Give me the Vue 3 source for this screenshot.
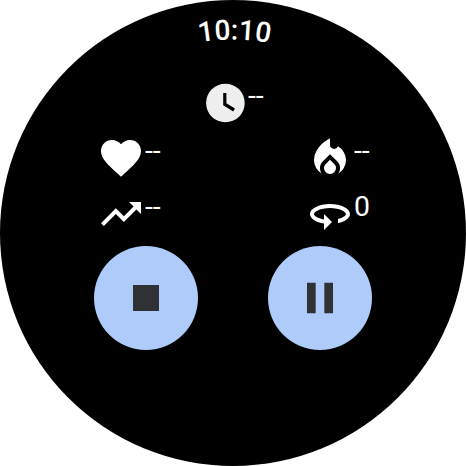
<script setup>
const icons = {
  clock: { box: '0 0 24 24', d: 'M12.2 2.35a9.65 9.65 0 1 0 0 19.3a9.65 9.65 0 1 0 0-19.3zM16.1 16.3L11.1 13.1V7h1.6v5.1l4.3 2.7-.9 1.5z' },
  heart: { box: '0 0 24 24', d: 'M12 21.35l-1.45-1.32C5.4 15.36 2 12.28 2 8.5 2 5.42 4.42 3 7.5 3c1.74 0 3.41.81 4.5 2.09C13.09 3.81 14.76 3 16.5 3 19.58 3 22 5.42 22 8.5c0 3.78-3.4 6.86-8.55 11.54L12 21.35z' },
  fire: { box: '0 -960 960 960', d: 'M160-400q0-105 50-187t110-138q60-56 110-82.5l50-26.5v132q0 37 25 58.5t56 21.5q17 0 32.5-7t28.5-23l18-22q72 42 116 116.5T800-400q0 88-43 160.5T644-125q17-24 26.5-52.5T680-238q0-40-15-75.5T622-377L480-516 339-377q-29 29-44 64t-15 75q0 32 9.5 60.5T316-125q-70-42-113-114.5T160-400Zm320-4 85 83q17 17 26 38t9 45q0 49-35 83.5T480-120q-50 0-85-34.5T360-238q0-23 9-44.5t26-38.5l85-83Z' },
  trend: { box: '0 0 24 24', d: 'M16 6l2.29 2.29-4.88 4.88-4-4L2 16.59 3.41 18l6-6 4 4 6.3-6.29L22 12V6z' },
  laps: { box: '0 0 24 24', d: 'M12 7C6.48 7 2 9.24 2 12c0 2.24 2.94 4.13 7 4.77V20l4-4-4-4v2.73c-3.15-.56-5-1.9-5-2.73 0-1.06 3.04-3 8-3s8 1.94 8 3c0 .73-1.46 1.89-4 2.53v2.05c3.53-.77 6-2.53 6-4.58 0-2.76-4.48-5-10-5z' },
}
const rows = [
  [{ icon: 'clock', value: '--' }],
  [{ icon: 'heart', value: '--' }, { icon: 'fire', value: '--' }],
  [{ icon: 'trend', value: '--' }, { icon: 'laps', value: '0' }],
]
</script>

<template>
  <main class="watch">
    <svg class="time" viewBox="0 0 466 79">
      <path id="time-arc" d="M39.5 233A193.5 193.5 0 0 1 426.5 233" fill="none" />
      <text text-anchor="middle"><textPath href="#time-arc" startOffset="50.25%">10:10</textPath></text>
    </svg>
    <section class="metrics">
      <div v-for="(row, i) in rows" :key="i" class="row" :class="'row-' + i">
        <div v-for="m in row" :key="m.icon" class="metric" :class="m.icon">
          <svg class="icon" :viewBox="icons[m.icon].box"><path :d="icons[m.icon].d" fill-rule="evenodd" /></svg>
          <span class="value">{{ m.value }}</span>
        </div>
      </div>
    </section>
    <section class="controls">
      <button class="control" aria-label="Stop">
        <svg class="glyph" viewBox="0 0 24 24"><path d="M6 6h12v12H6z" /></svg>
      </button>
      <button class="control" aria-label="Pause">
        <svg class="glyph" viewBox="0 0 24 24"><path d="M6 19h4V5H6v14zm8-14v14h4V5h-4z" /></svg>
      </button>
    </section>
  </main>
</template>

<style>
body {
  background: #fff;
}
</style>

<style scoped>
.watch {
  width: 466px;
  height: 466px;
  border-radius: 50%;
  background: #000;
  color: #fff;
  overflow: hidden;
  font-family: Roboto, sans-serif;
}
.time {
  display: block;
  width: 466px;
  height: 79px;
}
.time text {
  font-size: 28px;
  font-weight: 500;
  fill: #fff;
}
.row {
  display: flex;
  height: 56px;
}
.row-0 {
  height: 54px;
  padding-left: 201px;
}
.row-1,
.row-2 {
  padding-left: 97px;
}
.row-1 {
  height: 57px;
}
.metric {
  display: flex;
  flex: none;
  width: 209px;
}
.icon {
  display: block;
  width: 48px;
  height: 48px;
  flex: none;
  fill: #fff;
}
.heart .icon {
  margin-top: 0.6px;
}
.fire .icon {
  margin-top: -1px;
}
.clock .icon {
  fill: #eee;
}
.value {
  font-size: 28.4px;
  line-height: 33px;
}
.clock .value {
  margin-left: -1px;
}
.row-1 .value {
  padding-top: 1px;
}
.controls {
  display: flex;
  gap: 70px;
  padding-left: 94px;
}
.control {
  display: flex;
  align-items: center;
  justify-content: center;
  width: 104px;
  height: 104px;
  padding: 0;
  border: 0;
  border-radius: 50%;
  background: #aecbfa;
}
.glyph {
  width: 52px;
  height: 52px;
  fill: #303134;
}
</style>
